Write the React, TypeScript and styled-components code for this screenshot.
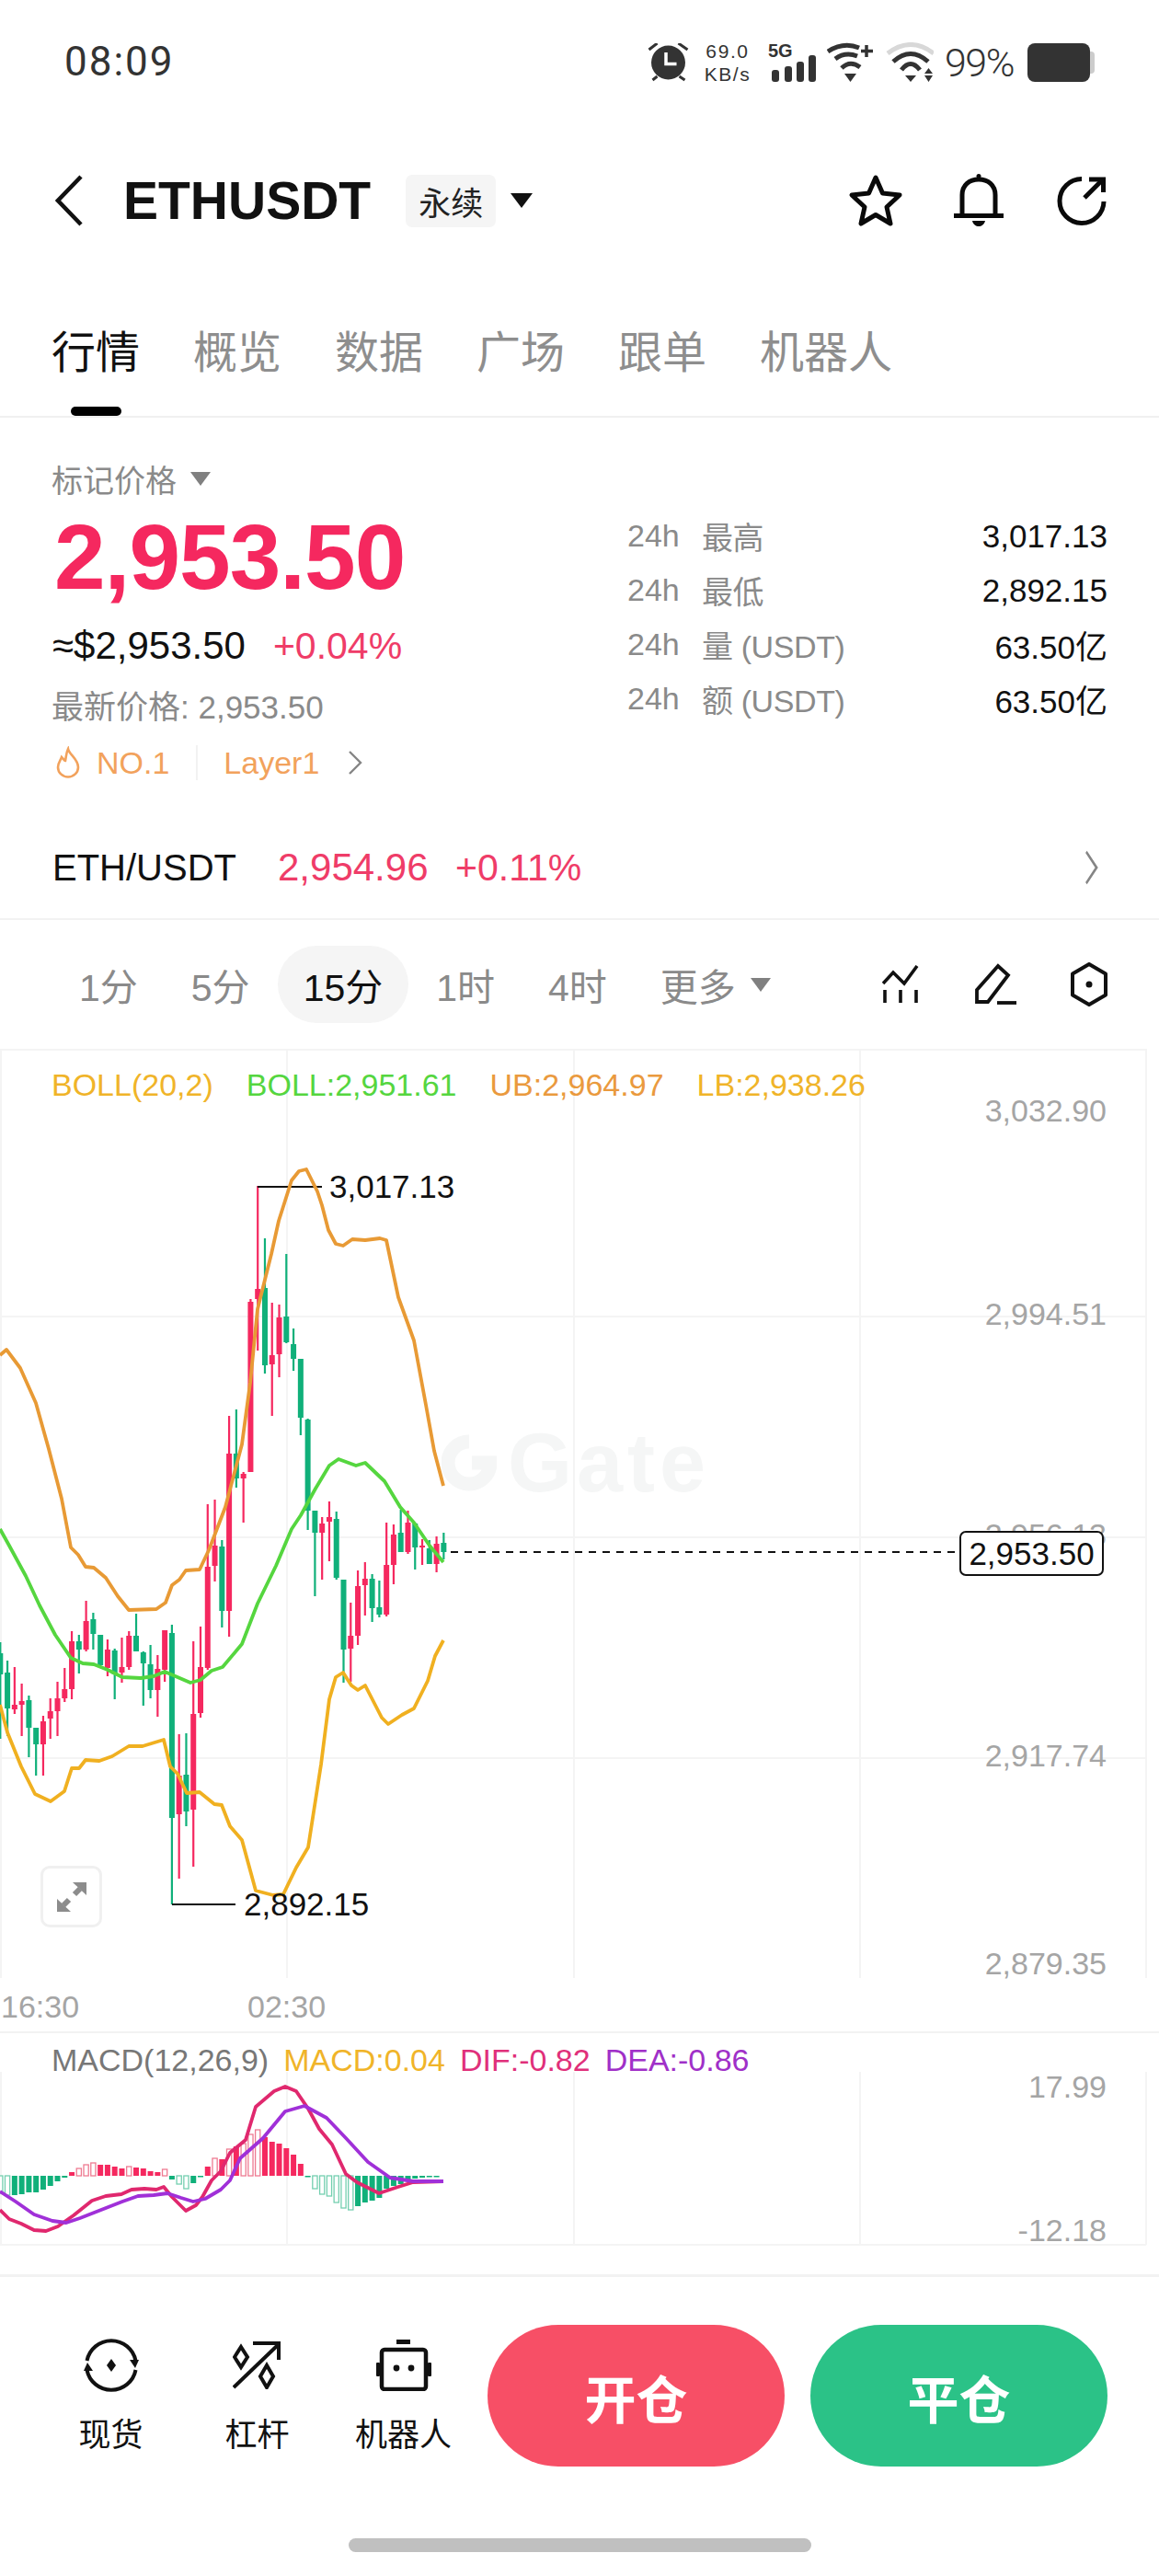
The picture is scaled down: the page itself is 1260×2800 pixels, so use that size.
import React from "react";
import styled, { createGlobalStyle } from "styled-components";

const GlobalStyle = createGlobalStyle`
    html, body {
        margin: 0;
        padding: 0;
        background: #fff;
    }
    * {
        box-sizing: border-box;
    }
`;

const FONT = `"Liberation Sans", "Noto Sans CJK SC", sans-serif`;
const RED = "#f5285f";
const GREEN = "#10b07a";
const GRAY = "#8a8a8a";

const Page = styled.div`
    width: 1260px;
    height: 2800px;
    background: #fff;
    font-family: ${FONT};
    overflow: hidden;
    display: flex;
    flex-direction: column;
`;

/* status bar */
const StatusBar = styled.div`
    height: 132px;
    display: flex;
    justify-content: space-between;
    padding: 46px 70px 0;
    color: #333;
`;
const Clock = styled.span`
    font-family: Roboto, ${FONT};
    font-weight: 400;
    font-size: 44px;
    line-height: 42px;
    letter-spacing: 2px;
`;
const StatusIcons = styled.div`
    display: flex;
    gap: 12px;
    height: 44px;
    align-items: center;
`;
const Speed = styled.div`
    width: 52px;
    display: flex;
    flex-direction: column;
    align-items: center;
    font-size: 21px;
    line-height: 25px;
    letter-spacing: 1.6px;
    white-space: nowrap;
`;
const Signal = styled.div`
    position: relative;
    width: 58px;
    height: 44px;
`;
const SignalBars = styled.svg`
    display: block;
`;
const FiveG = styled.span`
    position: absolute;
    left: 6px;
    top: -1px;
    font-size: 20px;
    line-height: 20px;
    font-weight: 700;
`;
const Percent = styled.span`
    width: 78px;
    font-family: Roboto, ${FONT};
    font-weight: 300;
    font-size: 43px;
    letter-spacing: -1.5px;
    white-space: nowrap;
`;
const Battery = styled.div`
    display: flex;
    align-items: center;
    width: 73px;
`;
const BatteryBody = styled.div`
    width: 68px;
    height: 42px;
    border-radius: 8px;
    background: #333;
`;
const BatteryTip = styled.div`
    width: 5px;
    height: 24px;
    border-radius: 0 4px 4px 0;
    background: #ccc;
`;

/* header */
const Header = styled.div`
    height: 172px;
    display: flex;
    align-items: center;
    padding: 0 55px 0 60px;
`;
const Title = styled.h1`
    margin: 0 38px 0 44px;
    font-size: 57px;
    font-weight: 700;
    color: #111;
    line-height: 1;
`;
const Badge = styled.span`
    width: 98px;
    height: 57px;
    border-radius: 7px;
    background: #f5f5f5;
    font-size: 35px;
    color: #222;
    display: flex;
    align-items: center;
    justify-content: center;
`;
const Caret = styled.span<{ $color?: string; $w?: number; $h?: number }>`
    width: 0;
    height: 0;
    border-left: ${(p) => (p.$w ?? 24) / 2}px solid transparent;
    border-right: ${(p) => (p.$w ?? 24) / 2}px solid transparent;
    border-top: ${(p) => p.$h ?? 16}px solid ${(p) => p.$color ?? "#111"};
    flex: none;
`;
const TitleCaret = styled.div`
    margin-left: 16px;
    display: flex;
`;
const HeaderActions = styled.div`
    margin-left: auto;
    display: flex;
    gap: 54px;
    align-items: center;
`;

/* tabs */
const Tabs = styled.div`
    height: 150px;
    border-bottom: 2px solid #f0f0f0;
    padding: 52px 0 0 56px;
    display: flex;
    gap: 58px;
`;
const Tab = styled.div<{ $active?: boolean }>`
    position: relative;
    font-size: 48px;
    line-height: 56px;
    height: 96px;
    color: ${(p) => (p.$active ? "#111" : "#8e8e8e")};
    ${(p) =>
        p.$active &&
        `&::after {
            content: "";
            position: absolute;
            left: 21px;
            bottom: 0;
            width: 55px;
            height: 10px;
            border-radius: 5px;
            background: #000;
        }`}
`;

/* quote */
const Quote = styled.div`
    height: 434px;
    display: flex;
    justify-content: space-between;
    padding: 45px 56px 0 56px;
`;
const QuoteLeft = styled.div`
    display: flex;
    flex-direction: column;
`;
const PriceType = styled.div`
    height: 42px;
    display: flex;
    align-items: center;
    gap: 15px;
    font-size: 34px;
    color: ${GRAY};
`;
const BigPrice = styled.div`
    height: 129px;
    line-height: 129px;
    font-size: 100px;
    font-weight: 700;
    letter-spacing: -1px;
    color: ${RED};
    margin-left: 3px;
`;
const UsdLine = styled.div`
    height: 64px;
    line-height: 64px;
    font-size: 42px;
    color: #111;
    display: flex;
    gap: 30px;
    margin-left: 1px;
`;
const Change = styled.span`
    color: #ef3c68;
    font-size: 41px;
`;
const Latest = styled.div`
    height: 70px;
    line-height: 70px;
    font-size: 35px;
    color: ${GRAY};
`;
const Tags = styled.div`
    height: 50px;
    display: flex;
    align-items: center;
    font-size: 34px;
    color: #f2a25c;
    padding-left: 4px;
`;
const TagText = styled.span<{ $left?: number; $right?: number }>`
    margin-left: ${(p) => p.$left ?? 0}px;
    margin-right: ${(p) => p.$right ?? 0}px;
`;
const TagDivider = styled.span`
    width: 2px;
    height: 38px;
    background: #f2f2f2;
    margin: 0 28px 0 29px;
`;
const Stats = styled.div`
    width: 522px;
    padding-top: 54px;
`;
const StatRow = styled.div`
    height: 59px;
    display: flex;
    align-items: center;
    font-size: 34px;
    color: ${GRAY};
`;
const StatPeriod = styled.span`
    width: 81px;
`;
const StatLabel = styled.span`
    letter-spacing: -0.4px;
`;
const StatValue = styled.span`
    margin-left: auto;
    color: #111;
    font-size: 35px;
`;
const EthRow = styled.div`
    height: 112px;
    border-bottom: 2px solid #f2f2f2;
    display: flex;
    align-items: center;
    padding: 0 66px 0 57px;
    font-size: 40px;
`;
const EthName = styled.span`
    color: #111;
    width: 245px;
`;
const EthPrice = styled.span`
    color: #ef3c68;
    width: 193px;
    font-size: 42px;
`;
const EthChange = styled.span`
    color: #ef3c68;
    font-size: 41px;
`;
const PushRight = styled.div`
    margin-left: auto;
    display: flex;
`;

/* timeframe */
const Timeframes = styled.div`
    height: 140px;
    display: flex;
    align-items: center;
    gap: 2px;
    padding: 0 55px 0 58px;
`;
const Frame = styled.div<{ $active?: boolean }>`
    height: 84px;
    padding: 0 28px;
    border-radius: 42px;
    display: flex;
    align-items: center;
    gap: 16px;
    font-size: 41px;
    color: ${(p) => (p.$active ? "#111" : GRAY)};
    background: ${(p) => (p.$active ? "#f5f5f5" : "transparent")};
`;
const ChartTools = styled.div`
    margin-left: auto;
    display: flex;
    align-items: center;
    gap: 58px;
`;

/* chart */
const ChartPane = styled.div<{ $height: number }>`
    position: relative;
    height: ${(p) => p.$height}px;
    flex: none;
`;
const ChartSvg = styled.svg`
    position: absolute;
    inset: 0;
    display: block;
`;
const Legend = styled.div<{ $top: number; $gap: number }>`
    position: absolute;
    left: 56px;
    top: ${(p) => p.$top}px;
    display: flex;
    gap: ${(p) => p.$gap}px;
    font-size: 34px;
    line-height: 40px;
    white-space: nowrap;
`;
const LegendItem = styled.span<{ $color: string }>`
    color: ${(p) => p.$color};
`;
const AxisLabel = styled.span<{ $top: number }>`
    position: absolute;
    right: 57px;
    top: ${(p) => p.$top - 20}px;
    font-size: 34px;
    line-height: 40px;
    color: #a5a5a5;
`;
const Extreme = styled.span<{ $left: number; $top: number }>`
    position: absolute;
    left: ${(p) => p.$left}px;
    top: ${(p) => p.$top - 20}px;
    font-size: 35px;
    line-height: 40px;
    color: #111;
`;
const LastPrice = styled.div`
    position: absolute;
    left: 1043px;
    top: 524px;
    width: 157px;
    height: 49px;
    border: 2px solid #111;
    border-radius: 7px;
    background: #fff;
    font-size: 35px;
    color: #111;
    display: flex;
    align-items: center;
    justify-content: center;
`;
const Watermark = styled.div`
    position: absolute;
    left: 480px;
    top: 415px;
    display: flex;
    align-items: center;
    gap: 12px;
    font-size: 90px;
    font-weight: 700;
    line-height: 70px;
    letter-spacing: 5px;
    color: #f5f6f6;
`;
const ExpandButton = styled.div`
    position: absolute;
    left: 44px;
    top: 888px;
    width: 67px;
    height: 67px;
    border: 3px solid #f0f0f0;
    border-radius: 10px;
    background: #fff;
    display: flex;
    align-items: center;
    justify-content: center;
`;
const TimeAxis = styled.div`
    height: 60px;
    flex: none;
    display: flex;
    align-items: center;
    padding: 4px 0 0 1px;
    font-size: 34px;
    color: #a5a5a5;
    border-bottom: 2px solid #f2f2f2;
`;
const TimeTick = styled.span`
    width: 268px;
`;

/* bottom */
const BottomBar = styled.div`
    flex: 1;
    border-top: 3px solid #f2f2f2;
    display: flex;
    flex-direction: column;
    align-items: center;
`;
const ActionRow = styled.div`
    width: 100%;
    margin-top: 52px;
    display: flex;
    padding-left: 41px;
`;
const NavItem = styled.div`
    width: 159px;
    padding-top: 14px;
    display: flex;
    flex-direction: column;
    align-items: center;
`;
const NavIcon = styled.div`
    height: 60px;
    display: flex;
    align-items: center;
`;
const NavLabel = styled.span`
    margin-top: 24px;
    font-size: 35px;
    line-height: 44px;
    color: #111;
    white-space: nowrap;
`;
const TradeButton = styled.div<{ $color: string; $gap: number }>`
    width: 323px;
    height: 154px;
    margin-left: ${(p) => p.$gap}px;
    border-radius: 77px;
    background: ${(p) => p.$color};
    color: #fff;
    font-size: 56px;
    font-weight: 700;
    display: flex;
    align-items: center;
    justify-content: center;
`;
const HomeBar = styled.div`
    width: 503px;
    height: 15px;
    margin-top: 78px;
    border-radius: 8px;
    background: #c0c0c0;
`;

/* [wick top, body top, body bottom, wick bottom, red] */
const CANDLES: [number, number, number, number, number][] = [
    [1785, 1797, 1820, 1890, 0], [1805, 1818, 1857, 1887, 0], [1812, 1853, 1858, 1863, 1], [1830, 1849, 1853, 1887, 1],
    [1843, 1848, 1878, 1910, 0], [1878, 1878, 1896, 1930, 0], [1865, 1871, 1896, 1930, 1], [1846, 1860, 1868, 1890, 1],
    [1828, 1846, 1860, 1887, 1], [1813, 1836, 1846, 1850, 1], [1773, 1784, 1836, 1847, 1], [1777, 1784, 1793, 1819, 0],
    [1740, 1762, 1793, 1795, 1], [1753, 1760, 1776, 1793, 0], [1777, 1777, 1810, 1812, 0], [1782, 1793, 1813, 1822, 1],
    [1792, 1794, 1820, 1847, 0], [1780, 1812, 1818, 1829, 1], [1773, 1778, 1812, 1815, 1], [1754, 1778, 1795, 1795, 0],
    [1795, 1796, 1808, 1854, 0], [1788, 1809, 1837, 1846, 0], [1799, 1814, 1837, 1866, 1], [1772, 1772, 1815, 1828, 1],
    [1766, 1775, 1976, 2070, 0], [1885, 1930, 1972, 2042, 1], [1884, 1929, 1969, 1985, 0], [1784, 1863, 1967, 2029, 1],
    [1768, 1812, 1862, 1867, 1], [1635, 1703, 1813, 1815, 1], [1630, 1680, 1702, 1719, 1], [1674, 1681, 1751, 1769, 0],
    [1539, 1580, 1751, 1779, 1], [1532, 1580, 1607, 1617, 0], [1600, 1602, 1607, 1655, 1], [1412, 1415, 1600, 1600, 1],
    [1289, 1401, 1412, 1468, 1], [1346, 1400, 1484, 1493, 0], [1416, 1473, 1483, 1539, 1], [1418, 1432, 1472, 1497, 1],
    [1363, 1431, 1459, 1460, 0], [1444, 1461, 1477, 1490, 0], [1477, 1477, 1541, 1560, 0], [1542, 1543, 1642, 1663, 0],
    [1642, 1642, 1666, 1735, 0], [1649, 1656, 1666, 1717, 1], [1632, 1649, 1654, 1697, 1], [1643, 1651, 1715, 1717, 0],
    [1717, 1717, 1793, 1829, 0], [1742, 1778, 1792, 1828, 1], [1707, 1724, 1778, 1788, 1], [1698, 1716, 1723, 1756, 1],
    [1711, 1716, 1748, 1763, 0], [1718, 1747, 1755, 1758, 0], [1655, 1701, 1755, 1757, 1], [1657, 1668, 1701, 1722, 1],
    [1641, 1666, 1687, 1687, 0], [1642, 1655, 1687, 1689, 1], [1655, 1656, 1682, 1706, 0], [1673, 1680, 1682, 1701, 1],
    [1674, 1683, 1700, 1700, 0], [1670, 1678, 1700, 1709, 1], [1666, 1677, 1687, 1695, 0],
];

const UPPER_BAND = "0,1473 7,1467 22,1487 39,1525 53,1575 67,1629 77,1682 85,1690 93,1703 102,1704 115,1715 128,1735 140,1750 170,1749 180,1742 187,1723 195,1717 202,1707 217,1706 227,1685 245,1638 263,1570 272,1503 280,1423 295,1363 303,1327 317,1283 325,1273 333,1271 345,1295 350,1310 357,1337 365,1352 373,1354 383,1347 397,1348 413,1346 420,1348 433,1410 450,1457 463,1527 472,1577 482,1615";
const MIDDLE_BAND = "0,1662 10,1680 28,1713 43,1745 60,1777 77,1802 90,1808 102,1809 117,1815 133,1823 153,1824 167,1822 179,1817 193,1823 207,1829 218,1826 230,1816 242,1812 263,1787 280,1743 300,1702 317,1662 327,1647 343,1618 358,1593 368,1586 387,1593 397,1590 418,1610 435,1638 450,1655 467,1680 482,1698";
const LOWER_BAND = "0,1853 8,1883 23,1920 38,1950 55,1958 70,1947 78,1922 86,1922 93,1913 108,1914 122,1909 140,1898 155,1898 178,1891 185,1920 193,1928 203,1949 217,1948 233,1961 241,1962 250,1985 263,2000 278,2055 297,2060 308,2059 322,2030 335,2008 349,1918 358,1847 365,1823 373,1818 382,1832 389,1837 397,1832 415,1867 422,1874 437,1864 450,1857 465,1827 473,1800 482,1783";
const DIF_LINE = "0,2402 10,2412 23,2417 37,2424 50,2425 63,2420 80,2408 100,2392 115,2387 132,2385 143,2380 157,2379 170,2380 178,2377 187,2388 202,2403 213,2397 220,2388 230,2370 240,2360 250,2340 267,2326 278,2290 298,2273 310,2268 322,2273 335,2292 347,2314 361,2331 376,2363 388,2372 412,2384 433,2377 449,2372 482,2371";
const DEA_LINE = "0,2382 17,2393 37,2407 57,2414 72,2416 87,2411 110,2402 133,2393 150,2387 167,2386 182,2384 197,2389 210,2393 223,2390 240,2380 250,2370 261,2346 286,2324 310,2295 331,2289 355,2302 376,2324 400,2350 424,2367 449,2371 482,2371";

const MACD_ZERO = 2365;
/* height from the zero line, hollow flag */
const MACD_BARS: [number, number][] = [
    [-19, 1], [-21, 1], [-21, 0], [-20, 0], [-18, 0], [-18, 0], [-15, 0], [-11, 0], [-6, 0], [-2, 0],
    [4, 0], [8, 1], [12, 1], [14, 1], [12, 0], [12, 0], [10, 0], [8, 0], [10, 1], [9, 0], [8, 0], [5, 0], [4, 0], [7, 1],
    [-4, 0], [-9, 1], [-14, 1], [-8, 0], [-1, 0], [10, 0], [19, 1], [18, 0], [29, 1], [32, 0], [35, 1], [45, 1], [50, 1],
    [42, 0], [37, 0], [35, 0], [30, 0], [23, 0], [13, 0], [-1, 0], [-14, 1], [-20, 1], [-22, 1], [-29, 1], [-35, 1], [-37, 1],
    [-33, 0], [-29, 0], [-27, 0], [-24, 0], [-14, 0], [-11, 0], [-9, 0], [-6, 0], [-3, 0], [-2, 0], [-1, 0], [-1, 0],
];

const STATS = [
    { label: "最高", value: "3,017.13" },
    { label: "最低", value: "2,892.15" },
    { label: "量 (USDT)", value: "63.50亿" },
    { label: "额 (USDT)", value: "63.50亿" },
];

const candleX = (i: number) => i * 7.775 + 0.3;

function Candles() {
    return (
        <g>
            {CANDLES.map(([high, top, bottom, low, red], i) => {
                const color = red ? RED : GREEN;
                const x = candleX(i);
                return (
                    <g key={i} fill={color}>
                        <rect x={x - 1.1} y={high} width={2.2} height={low - high} />
                        <rect x={x - 3} y={top} width={6} height={Math.max(bottom - top, 2)} />
                    </g>
                );
            })}
        </g>
    );
}

function MacdBars() {
    return (
        <g>
            {MACD_BARS.map(([h, hollow], i) => {
                const x = candleX(i);
                const y = h > 0 ? MACD_ZERO - h : MACD_ZERO;
                const height = Math.max(Math.abs(h), 1.5);
                const color = h > 0 ? RED : GREEN;
                return hollow ? (
                    <rect key={i} x={x - 2.6} y={y} width={5.2} height={height} fill="#fff" stroke={h > 0 ? "#ee7b92" : "#74cfb0"} strokeWidth={1.3} />
                ) : (
                    <rect key={i} x={x - 3} y={y} width={6} height={height} fill={color} />
                );
            })}
        </g>
    );
}

function BackIcon() {
    return (
        <svg width="30" height="56" viewBox="0 0 30 56">
            <polyline points="28,2 3,28 28,54" fill="none" stroke="#111" strokeWidth="4.5" />
        </svg>
    );
}

function StarIcon() {
    return (
        <svg width="60" height="58" viewBox="0 0 60 58">
            <polygon points="30,4 37.5,21 56,23 42,36 46,54 30,44.5 14,54 18,36 4,23 22.5,21" fill="none" stroke="#0a0a0a" strokeWidth="5" strokeLinejoin="round" />
        </svg>
    );
}

function BellIcon() {
    return (
        <svg width="59" height="60" viewBox="0 0 59 60" fill="none" stroke="#0a0a0a" strokeWidth="5">
            <path d="M10 46V24C10 13 18 7 28 7C38 7 46 13 46 24V46" />
            <path d="M1 46.5H55" />
            <circle cx="28" cy="3.5" r="2.5" fill="#0a0a0a" stroke="none" />
            <path d="M21 52H35C34 56 31 58 28 58C25 58 22 56 21 52Z" fill="#0a0a0a" stroke="none" />
        </svg>
    );
}

function ShareIcon() {
    return (
        <svg width="56" height="54" viewBox="0 0 56 54" fill="none" stroke="#0a0a0a" strokeWidth="5">
            <path d="M27 3.5A24 24 0 1 0 51 28" />
            <path d="M30 24L49 5" />
            <path d="M35 4H50.5V18" />
        </svg>
    );
}

function AlarmIcon() {
    return (
        <svg width="51" height="42" viewBox="0 0 46 42">
            <circle cx="22" cy="21" r="18.5" fill="#333" />
            <path d="M1 7L10 0M33 0L43 7M5 40L10 36M34 36L40 40" stroke="#333" strokeWidth="3" />
            <path d="M19.5 10V22.5H31" fill="none" stroke="#fff" strokeWidth="3.5" />
        </svg>
    );
}

function SignalIcon() {
    return (
        <Signal>
            <SignalBars width="58" height="44" viewBox="0 0 58 44" fill="#333">
                <rect x="10" y="30" width="8" height="13" rx="3" />
                <rect x="24" y="26" width="8" height="17" rx="3" />
                <rect x="37" y="21" width="8" height="22" rx="3" />
                <rect x="50" y="14" width="8" height="29" rx="3" />
            </SignalBars>
            <FiveG>5G</FiveG>
        </Signal>
    );
}

function WifiPlusIcon() {
    return (
        <svg width="50" height="44" viewBox="0 0 50 44" fill="none" stroke="#333" strokeWidth="5">
            <path d="M1 10Q18 -1 35 6" />
            <path d="M9 18Q20 10 33 15" />
            <path d="M16 28Q25 19 36 27" />
            <path d="M19 34H32L25.5 43Z" fill="#333" stroke="none" />
            <path d="M43 3V16M37 9.5H50" strokeWidth="3.5" />
        </svg>
    );
}

function WifiSwapIcon() {
    return (
        <svg width="54" height="44" viewBox="0 0 54 44" fill="none" stroke="#333" strokeWidth="5">
            <path d="M4 12Q29 -7 54 12" stroke="#d8d8d8" />
            <path d="M10 21Q29 4 48 21" />
            <path d="M19 30Q29 17 39 30" />
            <path d="M23 36H35L29 43Z" fill="#333" stroke="none" />
            <path d="M44 34H53L48.5 28ZM44 36H53L48.5 43Z" fill="#333" stroke="none" />
        </svg>
    );
}

function FlameIcon() {
    return (
        <svg width="28" height="36" viewBox="0 0 28 36">
            <path d="M14 3C15 9 25 14 25 23A11 10.5 0 0 1 3 23C3 18 6 15 7 12C9 14 10 16 11 16C12 11 12 7 14 3Z" fill="none" stroke="#f2a25c" strokeWidth="2.6" />
        </svg>
    );
}

function ChevronRight({ height = 28, width = 16 }: { height?: number; width?: number }) {
    return (
        <svg width={width} height={height} viewBox="0 0 16 28" preserveAspectRatio="none">
            <polyline points="2,2 14,14 2,26" fill="none" stroke="#858585" strokeWidth="2.4" />
        </svg>
    );
}

function IndicatorIcon() {
    return (
        <svg width="42" height="42" viewBox="0 0 42 42" fill="none" stroke="#111" strokeWidth="3.6">
            <polyline points="1,20 12,8 24,20 38,1" />
            <path d="M3 27V41M20 27V41M37 27V41" />
        </svg>
    );
}

function PenIcon() {
    return (
        <svg width="46" height="46" viewBox="0 0 46 46" fill="none" stroke="#111" strokeWidth="3.8">
            <path d="M3 42V29L26 3L37 13L15 42Z" />
            <path d="M25 43H46" />
        </svg>
    );
}

function HexIcon() {
    return (
        <svg width="42" height="48" viewBox="0 0 42 48" fill="none" stroke="#111" strokeWidth="4">
            <polygon points="21,2 39,12.5 39,35.5 21,46 3,35.5 3,12.5" strokeLinejoin="round" />
            <circle cx="21" cy="24" r="3.5" fill="#111" stroke="none" />
        </svg>
    );
}

function ExpandIcon() {
    return (
        <svg width="32" height="32" viewBox="0 0 32 32" fill="#8c8c8c">
            <polygon points="17,0 32,0 32,14" />
            <polygon points="0,18 0,32 15,32" />
            <path d="M25 7L19 13M7 25L13 19" stroke="#8c8c8c" strokeWidth="6" />
        </svg>
    );
}

function GateLogo() {
    return (
        <svg width="60" height="62" viewBox="0 0 60 62" fill="none">
            <path d="M30 8A23 23 0 1 0 53 31H33" stroke="#f5f6f6" strokeWidth="15" />
        </svg>
    );
}

function SpotIcon() {
    return (
        <svg width="60" height="60" viewBox="0 0 60 60" fill="#111">
            <path d="M3.5 25A27 27 0 0 1 56.5 25" fill="none" stroke="#111" strokeWidth="4" />
            <path d="M56.5 35A27 27 0 0 1 3.5 35" fill="none" stroke="#111" strokeWidth="4" />
            <path d="M50 24H60L56 33Z" />
            <path d="M0 36H10L4 27Z" />
            <path d="M30 23L35 30L30 37L25 30Z" />
        </svg>
    );
}

function LeverageIcon() {
    return (
        <svg width="54" height="52" viewBox="2 0 54 52" fill="none" stroke="#111" strokeWidth="4">
            <path d="M3 50L51 4" />
            <path d="M24 2H52V20" />
            <path d="M11 6L18 17L11 28L4 17Z" />
            <path d="M39 26L46 38L39 50L32 38Z" />
        </svg>
    );
}

function RobotIcon() {
    return (
        <svg width="60" height="56" viewBox="0 0 60 56" fill="#111">
            <rect x="22" y="0" width="15" height="5" />
            <rect x="6" y="11" width="48" height="43" rx="3" fill="none" stroke="#111" strokeWidth="4.5" />
            <rect x="0" y="25" width="4" height="15" rx="1" />
            <rect x="56" y="25" width="4" height="15" rx="1" />
            <circle cx="22" cy="31" r="3.4" />
            <circle cx="38" cy="31" r="3.4" />
        </svg>
    );
}

function App() {
    return (
        <Page>
            <GlobalStyle />
            <StatusBar>
                <Clock>08:09</Clock>
                <StatusIcons>
                    <AlarmIcon />
                    <Speed>
                        <span>69.0</span>
                        <span>KB/s</span>
                    </Speed>
                    <SignalIcon />
                    <WifiPlusIcon />
                    <WifiSwapIcon />
                    <Percent>99%</Percent>
                    <Battery>
                        <BatteryBody />
                        <BatteryTip />
                    </Battery>
                </StatusIcons>
            </StatusBar>

            <Header>
                <BackIcon />
                <Title>ETHUSDT</Title>
                <Badge>永续</Badge>
                <TitleCaret>
                    <Caret />
                </TitleCaret>
                <HeaderActions>
                    <StarIcon />
                    <BellIcon />
                    <ShareIcon />
                </HeaderActions>
            </Header>

            <Tabs>
                <Tab $active>行情</Tab>
                <Tab>概览</Tab>
                <Tab>数据</Tab>
                <Tab>广场</Tab>
                <Tab>跟单</Tab>
                <Tab>机器人</Tab>
            </Tabs>

            <Quote>
                <QuoteLeft>
                    <PriceType>
                        标记价格
                        <Caret $color="#808080" $w={22} $h={15} />
                    </PriceType>
                    <BigPrice>2,953.50</BigPrice>
                    <UsdLine>
                        <span>≈$2,953.50</span>
                        <Change>+0.04%</Change>
                    </UsdLine>
                    <Latest>最新价格: 2,953.50</Latest>
                    <Tags>
                        <FlameIcon />
                        <TagText $left={17}>NO.1</TagText>
                        <TagDivider />
                        <TagText $right={31}>Layer1</TagText>
                        <ChevronRight />
                    </Tags>
                </QuoteLeft>
                <Stats>
                    {STATS.map((stat) => (
                        <StatRow key={stat.label}>
                            <StatPeriod>24h</StatPeriod>
                            <StatLabel>{stat.label}</StatLabel>
                            <StatValue>{stat.value}</StatValue>
                        </StatRow>
                    ))}
                </Stats>
            </Quote>

            <EthRow>
                <EthName>ETH/USDT</EthName>
                <EthPrice>2,954.96</EthPrice>
                <EthChange>+0.11%</EthChange>
                <PushRight>
                    <ChevronRight height={40} width={15} />
                </PushRight>
            </EthRow>

            <Timeframes>
                <Frame>1分</Frame>
                <Frame>5分</Frame>
                <Frame $active>15分</Frame>
                <Frame>1时</Frame>
                <Frame>4时</Frame>
                <Frame>
                    更多
                    <Caret $color="#808080" $w={22} $h={15} />
                </Frame>
                <ChartTools>
                    <IndicatorIcon />
                    <PenIcon />
                    <HexIcon />
                </ChartTools>
            </Timeframes>

            <ChartPane $height={1010}>
                <Watermark>
                    <GateLogo />
                    Gate
                </Watermark>
                <ChartSvg width="1260" height="1010" viewBox="0 1140 1260 1010">
                    <g stroke="#f4f4f4" strokeWidth="2">
                        <path d="M0 1141H1246M0 1431H1246M0 1671H1246M0 1911H1246" />
                        {[1, 312, 624, 935, 1246].map((x) => (
                            <path key={x} d={`M${x} 1140V2150`} />
                        ))}
                    </g>
                    <Candles />
                    <path d="M280 1290H350M187 2070H256" fill="none" stroke="#111" strokeWidth="2" />
                    <g fill="none" strokeWidth="3.8" strokeLinejoin="round">
                        <polyline points={UPPER_BAND} stroke="#e89a35" />
                        <polyline points={LOWER_BAND} stroke="#f0b020" />
                        <polyline points={MIDDLE_BAND} stroke="#55d63f" />
                    </g>
                    <path d="M490 1687H1044" stroke="#111" strokeWidth="2" strokeDasharray="8 7" />
                </ChartSvg>
                <Legend $top={19} $gap={36}>
                    <LegendItem $color="#f0b429">BOLL(20,2)</LegendItem>
                    <LegendItem $color="#55d63f">BOLL:2,951.61</LegendItem>
                    <LegendItem $color="#ea9a3e">UB:2,964.97</LegendItem>
                    <LegendItem $color="#f0b429">LB:2,938.26</LegendItem>
                </Legend>
                <AxisLabel $top={67}>3,032.90</AxisLabel>
                <AxisLabel $top={288}>2,994.51</AxisLabel>
                <AxisLabel $top={528}>2,956.13</AxisLabel>
                <AxisLabel $top={768}>2,917.74</AxisLabel>
                <AxisLabel $top={994}>2,879.35</AxisLabel>
                <Extreme $left={358} $top={150}>3,017.13</Extreme>
                <Extreme $left={265} $top={930}>2,892.15</Extreme>
                <LastPrice>2,953.50</LastPrice>
                <ExpandButton>
                    <ExpandIcon />
                </ExpandButton>
            </ChartPane>

            <TimeAxis>
                <TimeTick>16:30</TimeTick>
                <span>02:30</span>
            </TimeAxis>

            <ChartPane $height={262}>
                <ChartSvg width="1260" height="262" viewBox="0 2210 1260 262">
                    <g stroke="#f4f4f4" strokeWidth="2">
                        <path d="M0 2440H1246" />
                        {[1, 312, 624, 935, 1246].map((x) => (
                            <path key={x} d={`M${x} 2252V2440`} />
                        ))}
                    </g>
                    <MacdBars />
                    <g fill="none" strokeWidth="3.8" strokeLinejoin="round">
                        <polyline points={DIF_LINE} stroke="#e0286e" />
                        <polyline points={DEA_LINE} stroke="#a030d8" />
                    </g>
                </ChartSvg>
                <Legend $top={9} $gap={16}>
                    <LegendItem $color="#777">MACD(12,26,9)</LegendItem>
                    <LegendItem $color="#f0b429">MACD:0.04</LegendItem>
                    <LegendItem $color="#e0307a">DIF:-0.82</LegendItem>
                    <LegendItem $color="#a030c8">DEA:-0.86</LegendItem>
                </Legend>
                <AxisLabel $top={58}>17.99</AxisLabel>
                <AxisLabel $top={214}>-12.18</AxisLabel>
            </ChartPane>

            <BottomBar>
                <ActionRow>
                    <NavItem>
                        <NavIcon><SpotIcon /></NavIcon>
                        <NavLabel>现货</NavLabel>
                    </NavItem>
                    <NavItem>
                        <NavIcon><LeverageIcon /></NavIcon>
                        <NavLabel>杠杆</NavLabel>
                    </NavItem>
                    <NavItem>
                        <NavIcon><RobotIcon /></NavIcon>
                        <NavLabel>机器人</NavLabel>
                    </NavItem>
                    <TradeButton $color="#f74f66" $gap={12}>开仓</TradeButton>
                    <TradeButton $color="#2bc287" $gap={28}>平仓</TradeButton>
                </ActionRow>
                <HomeBar />
            </BottomBar>
        </Page>
    );
}

export default App;
